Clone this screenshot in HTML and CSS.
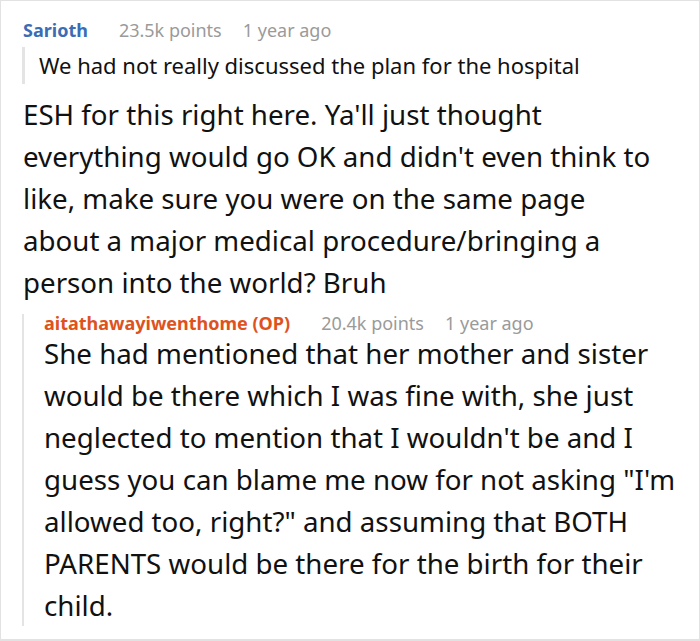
FILE: index.html
```html
<!DOCTYPE html>
<html>
<head>
<meta charset="utf-8">
<link rel="stylesheet" href="styles.css">
</head>
<body>
<div class="frame">
  <div class="meta">
    <span class="author">Sarioth</span>
    <span class="points">23.5k points</span>
    <span class="time">1 year ago</span>
  </div>
  <blockquote class="quote">We had not really discussed the plan for the hospital</blockquote>
  <p class="body">ESH for this right here. Ya'll just thought<br>everything would go OK and didn't even think to<br>like, make sure you were on the same page<br>about a major medical procedure/bringing a<br>person into the world? Bruh</p>
  <div class="reply">
    <div class="meta meta-reply">
      <span class="author op">aitathawayiwenthome (OP)</span>
      <span class="points">20.4k points</span>
      <span class="time">1 year ago</span>
    </div>
    <p class="body body-reply">She had mentioned that her mother and sister<br>would be there which I was fine with, she just<br>neglected to mention that I wouldn't be and I<br>guess you can blame me now for not asking "I'm<br>allowed too, right?" and assuming that BOTH<br>PARENTS would be there for the birth for their<br>child.</p>
  </div>
</div>
</body>
</html>
```

FILE: styles.css
```css
html, body {
  margin: 0;
  padding: 0;
  background: #ffffff;
}

.frame {
  box-sizing: border-box;
  width: 700px;
  height: 641px;
  border: 1px solid #e2e2e2;
  border-bottom-width: 2px;
  padding: 17px 22px 0 22px;
  font-family: "Noto Sans", "Open Sans", sans-serif;
  color: #111111;
  overflow: hidden;
}

.meta {
  display: flex;
  align-items: baseline;
  font-size: 18px;
  line-height: 24px;
  white-space: nowrap;
}

.author {
  font-weight: 700;
  color: #3a6db4;
}

.author.op {
  color: #de531d;
}

.points {
  color: #9a9a9a;
  margin-left: 31px;
}

.time {
  color: #9a9a9a;
  margin-left: 21px;
}

.quote {
  margin: 5px 0 0 -1px;
  border-left: 3px solid #e4e4e4;
  padding-left: 14px;
  font-size: 22px;
  line-height: 37px;
  white-space: nowrap;
}

.body {
  margin: 9px 0 0 0;
  font-size: 27.7px;
  line-height: 42px;
  white-space: nowrap;
}

.reply {
  margin: 11px 0 0 -1px;
  border-left: 2px solid #e4e4e4;
  padding-left: 20px;
}

.meta-reply {
  line-height: 18px;
}

.body-reply {
  margin: 0 0 -10px 0;
}
```
